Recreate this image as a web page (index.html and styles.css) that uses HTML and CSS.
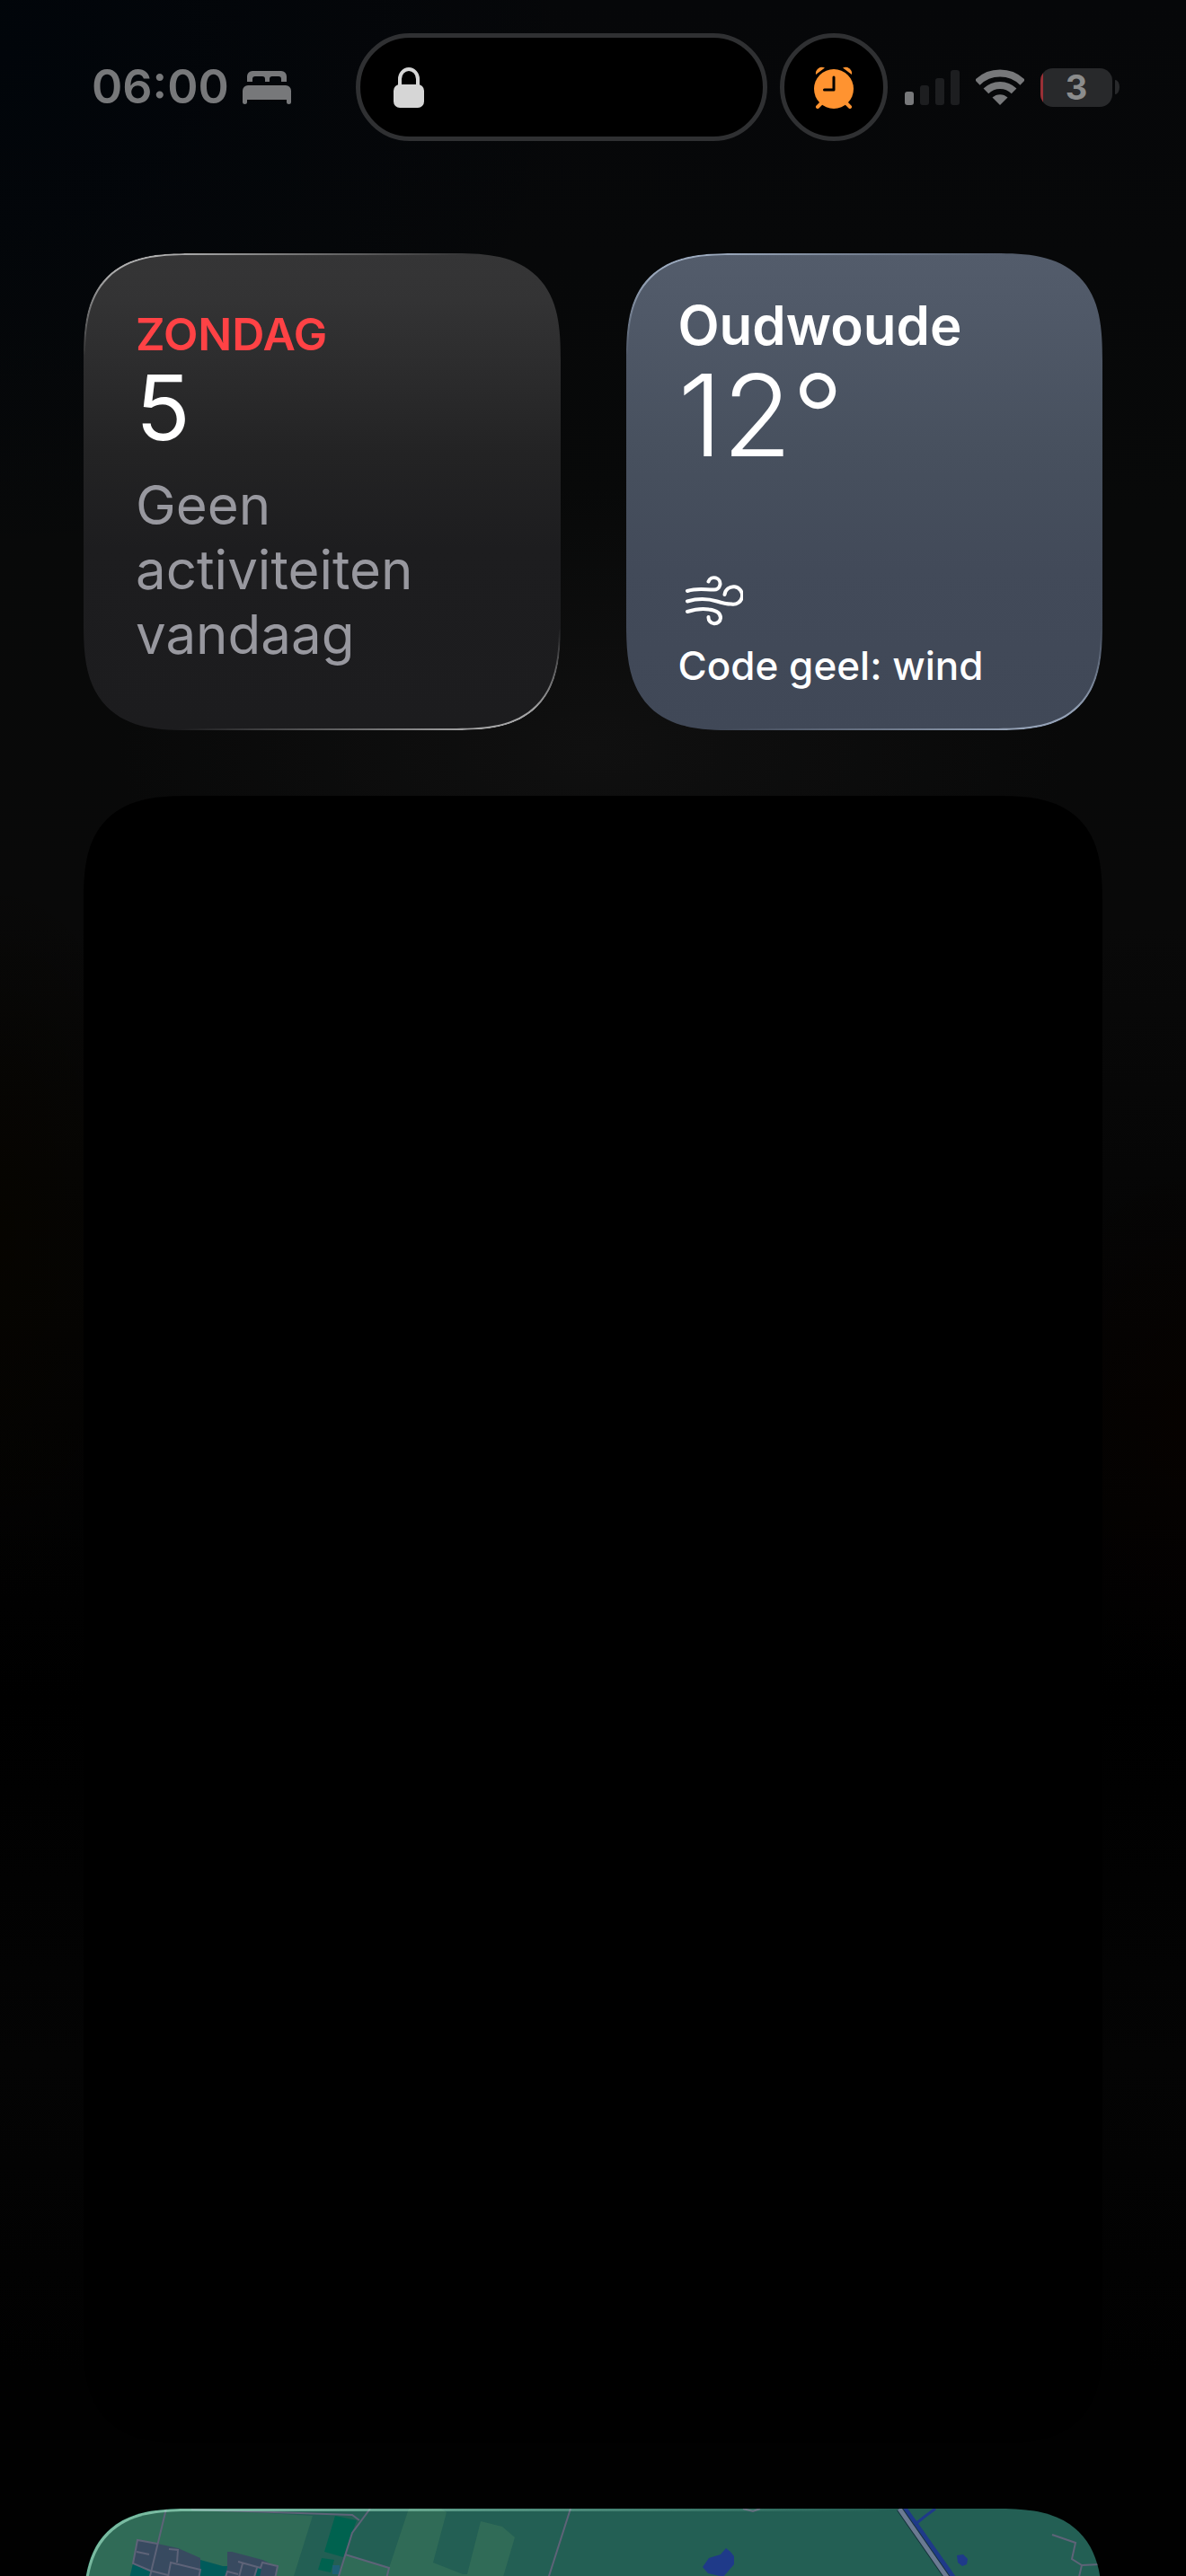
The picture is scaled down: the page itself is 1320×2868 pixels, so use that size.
FILE: index.html
```html
<!DOCTYPE html>
<html lang="nl">
<head>
  <meta charset="utf-8">
  <meta name="viewport" content="width=device-width, initial-scale=1">
  <title>Widgets</title>
  <link rel="stylesheet" href="styles.css">
</head>
<body>
  <div class="screen">

    <header class="status">
      <div class="status-left">
        <span class="time">06:00</span>
        <svg class="bed" viewBox="0 0 55 37" width="55" height="37">
          <path d="M5 12V6a6 6 0 0 1 6-6h32a6 6 0 0 1 6 6v6h-6V9a3 3 0 0 0-3-3h-7a3 3 0 0 0-3 3v3h-5V9a3 3 0 0 0-3-3h-8a3 3 0 0 0-3 3v3z"/>
          <path d="M0 22a6 6 0 0 1 6-6h42a6 6 0 0 1 6 6v13a2.500 2 0 0 1-5 0v-3H5v3a2.500 2 0 0 1-5 0z"/>
        </svg>
      </div>

      <div class="island">
        <svg viewBox="0 0 34 45" width="34" height="45">
          <path d="M7 22V13a10 11 0 0 1 20 0v9" fill="none" stroke="#d6d6d6" stroke-width="4"/>
          <rect y="19" width="34" height="26" rx="7" fill="#d6d6d6"/>
        </svg>
      </div>
      <div class="island island-round">
        <svg viewBox="0 0 44 48" width="44" height="48">
          <g fill="#ff9330">
            <circle cx="22" cy="26" r="22"/>
            <path d="M2 10A7 7 0 0 1 12 2.500z"/>
            <path d="M42 10A7 7 0 0 0 32 2.500z"/>
          </g>
          <path d="M4 46l5-5M40 46l-5-5" stroke="#ff9330" stroke-width="4" stroke-linecap="round"/>
          <path d="M22 13v14H11.500" fill="none" stroke="#000" stroke-width="3" stroke-linecap="round" stroke-linejoin="round"/>
        </svg>
      </div>

      <div class="status-right">
        <svg class="bars" viewBox="0 0 61 39" width="61" height="39">
          <rect class="on" x="0" y="24" width="10" height="15" rx="3"/>
          <rect x="17" y="17" width="10" height="22" rx="3"/>
          <rect x="34" y="9" width="10" height="30" rx="3"/>
          <rect x="51" y="0" width="10" height="39" rx="3"/>
        </svg>
        <svg class="wifi" viewBox="0 0 54 40" width="54" height="40">
          <path d="M1.800 14.800A36 36 0 0 1 52.200 14.800" fill="none" stroke="#77787a" stroke-width="8"/>
          <path d="M11.400 24.400A22 22 0 0 1 42.600 24.400" fill="none" stroke="#77787a" stroke-width="8"/>
          <path d="M27 40L18.500 31.500A12.500 12.500 0 0 1 35.500 31.500z" fill="#77787a"/>
        </svg>
        <div class="battery">
          <span class="level">3</span>
        </div>
      </div>
    </header>

    <main class="widgets">
      <section class="card calendar">
        <h2 class="day">ZONDAG</h2>
        <p class="date">5</p>
        <p class="events">Geen activiteiten vandaag</p>
      </section>

      <section class="card weather">
        <h2 class="city">Oudwoude</h2>
        <p class="temp">12°</p>
        <svg class="wind" viewBox="0 0 64 56" width="64" height="56">
          <path d="M2 17C13 13.500 21 15.500 31 15.500A6.700 6.700 0 1 0 25.500 6.500"/>
          <path d="M2 28.500C16 24.500 25 25.500 35 28.500C41 30.500 46 31.500 51 31.500A9.800 9.800 0 1 0 43.500 21"/>
          <path d="M2 40C13 36.500 20 36.500 26 37.500C34 38.500 39 41 39 47A6.700 6.700 0 0 1 25.500 46"/>
        </svg>
        <p class="warning">Code geel: wind</p>
      </section>

      <section class="card empty"></section>

      <section class="card map">
        <svg viewBox="0 0 1134 200">
          <!-- land -->
          <g fill="#306b57">
            <path d="M0 0H120L255 8L234 75L200 200H0z"/>
            <path d="M362 0H398L404 4L389 60L422 73L427 73L442 14L466 20L480 32L467 76L430 200H250L284 75L291 51L340 66z"/>
          </g>
          <g fill="#00624f">
            <path d="M280 8L304 13L289 54L268 48z"/>
            <path d="M265 55L279 57L275 71L261 68z"/>
          </g>
          <path d="M277 63h8v10h-8z" fill="#1f5f75"/>
          <!-- village -->
          <g fill="#384a60">
            <path d="M60 35L82 39L105 44L130 55V90H75L55 60z"/>
            <path d="M160 48H165L199 57L216 65L212 90H155L160 64z"/>
          </g>
          <g fill="#005b5b">
            <path d="M130 57L155 64L160 64L157 90H130z"/>
            <path d="M55 61L75 69L71 90H48z"/>
            <path d="M192 66h6l-4 20h-4z"/>
          </g>
          <!-- water -->
          <g fill="#1f3a89">
            <path d="M689 65L696 55L709 51L715 44L720 48L724 53V62L712 76L695 72z"/>
            <path d="M972 52L979 51L984 56L983 62L978 64L973 60z"/>
          </g>
          <path d="M913 0L966 75L1053 200" fill="none" stroke="#1f3a89" stroke-width="7"/>
          <path d="M948 0L936 9L926 17" fill="none" stroke="#1f3a89" stroke-width="3"/>
          <!-- roads -->
          <g fill="none" stroke="#5e6378" stroke-width="2">
            <path d="M120 1L299 7L307 13M319 0L299 27L284 75L250 200M291 51L340 66L337 78"/>
            <path d="M92 0L74 75L50 180"/>
            <path d="M82 39L60 35L55 61L74 69L94 74M59 48L73 51"/>
            <path d="M95 45L105 46L104 60M94 76L97 60L130 68L128 78"/>
            <path d="M172 59L197 66L199 60L216 64L213 78M177 61L173 76M193 66L190 76M158 76L160 70L172 73"/>
            <path d="M542 0L518 75L478 200M734 0L745 3L753 0"/>
            <path d="M1078 29L1104 38L1100 56L1111 63L1134 62M1111 63L1107 80"/>
          </g>
          <path d="M908 0L960 75L1047 200" fill="none" stroke="#17333c" stroke-width="7"/>
          <path d="M908 0L960 75L1047 200" fill="none" stroke="#6b7a92" stroke-width="5"/>
        </svg>
      </section>
    </main>

  </div>
</body>
</html>
```
FILE: styles.css
```css
* {
  box-sizing: border-box;
}

body {
  margin: 0;
  background-color: #000;
  color: #fff;
  font-family: Inter, "Liberation Sans", sans-serif;
}

h2, p {
  margin: 0;
}

svg {
  display: block;
  flex-shrink: 0;
}

.screen {
  height: 100vh;
  overflow: hidden;
  background:
    radial-gradient(ellipse 40% 10% at 50% 29%, #101010, transparent),
    radial-gradient(ellipse 50% 20% at 0% 2%, #01050a, transparent),
    radial-gradient(ellipse 14% 14% at 0% 48%, #060400, transparent),
    radial-gradient(ellipse 14% 10% at 100% 55%, #060200, transparent),
    linear-gradient(#060709 0%, #080909 20%, #090909 36%, #030303 55%, #000 66%, #040404 80%, #010101 92%);
}

/* status bar */
.status {
  display: flex;
  align-items: center;
  padding: 37px 74px 0 102px;
}

.status-left {
  display: flex;
  align-items: center;
  gap: 15px;
  margin-right: auto;
}

.time {
  color: #77787a;
  font-size: 52px;
  font-weight: 600;
  line-height: 60px;
}

.bed {
  fill: #77787a;
}

.island {
  display: flex;
  align-items: center;
  width: 458px;
  height: 120px;
  padding-left: 37px;
  border: 5px solid #2f3032;
  border-radius: 60px;
  background-color: #000;
}

.island-round {
  justify-content: center;
  width: 120px;
  margin-left: 14px;
  padding-left: 0;
}

.status-right {
  display: flex;
  align-items: center;
  gap: 18px;
  margin-left: 19px;
}

.bars {
  fill: #1d1e20;
}

.bars .on {
  fill: #77787a;
}

.battery {
  display: flex;
  align-items: center;
  gap: 3px;
}

.battery::after {
  content: "";
  width: 5px;
  height: 16px;
  border-radius: 0 5px 5px 0 / 0 8px 8px 0;
  background-color: #28292b;
}

.level {
  width: 80px;
  height: 43px;
  border-radius: 14px;
  background: linear-gradient(90deg, #9a3036 3px, #28292b 3px);
  color: #8b8c8c;
  font-size: 38px;
  font-weight: 700;
  line-height: 43px;
  text-align: center;
}

/* widgets */
.widgets {
  display: grid;
  grid-template-columns: 1fr 1fr;
  gap: 73px;
  padding: 125px 93px 0;
}

.card {
  --edge: 255, 255, 255;
  position: relative;
  overflow: hidden;
  border-radius: 88px;
}

@supports (corner-shape: squircle) {
  .card {
    border-radius: 120px;
    corner-shape: superellipse(1.5);
  }
}

/* light along the glass edge */
.card::after {
  content: "";
  position: absolute;
  inset: 0;
  padding: 2px;
  border-radius: inherit;
  corner-shape: inherit;
  background: linear-gradient(165deg,
    rgba(var(--edge), .6) 4%, rgba(var(--edge), .35) 9%, rgba(var(--edge), 0) 17%,
    rgba(var(--edge), 0) 83%, rgba(var(--edge), .35) 91%, rgba(var(--edge), .6) 96%);
  mask: linear-gradient(#000 0 0) content-box exclude, linear-gradient(#000 0 0);
}

.calendar,
.weather {
  display: flex;
  flex-direction: column;
  aspect-ratio: 1;
}

.calendar {
  padding: 60px 58px;
  background: linear-gradient(#353536, #333334 10%, #232324 42%, #1d1d1f 62%, #1c1c1e);
}

.day {
  color: #ff4245;
  font-size: 50px;
  font-weight: 600;
  line-height: 60px;
}

.date {
  font-size: 100px;
  line-height: 104px;
}

.events {
  max-width: 360px;
  margin-top: 20px;
  color: #98989f;
  font-size: 60px;
  line-height: 72px;
}

.weather {
  --edge: 205, 222, 245;
  padding: 44px 58px;
  background: linear-gradient(#535c6b, #505968 12%, #47505e 42%, #424a59 66%, #404857);
}

.city {
  font-size: 60px;
  font-weight: 600;
  line-height: 72px;
}

.temp {
  font-size: 126px;
  font-weight: 300;
  line-height: 128px;
}

.wind {
  margin: auto 0 16px 8px;
  fill: none;
  stroke: #fff;
  stroke-width: 4;
  stroke-linecap: round;
}

.warning {
  font-size: 44px;
  font-weight: 500;
  line-height: 56px;
}

.empty,
.map {
  grid-column: 1 / -1;
}

.empty {
  aspect-ratio: 1134 / 1834;
  background-color: #000;
}

.empty::after {
  display: none;
}

.map {
  --edge: 170, 240, 210;
  aspect-ratio: 1;
  background-color: #235f54;
}

.map::after {
  padding: 3px;
}
```
